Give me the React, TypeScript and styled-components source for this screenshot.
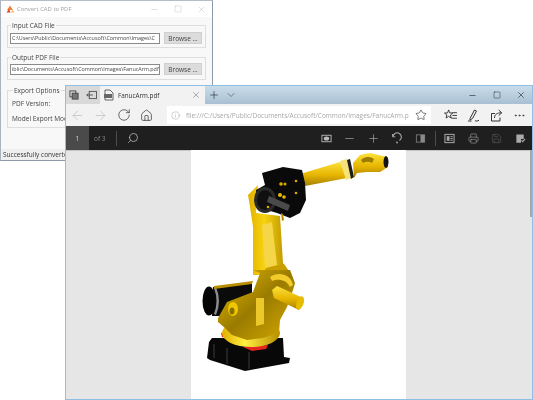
import styled, { createGlobalStyle } from 'styled-components';
import {
  ArrowLeft,
  ArrowRight,
  ChevronDown,
  Ellipsis,
  Home,
  Info,
  Minus,
  Plus,
  Printer,
  RotateCw,
  Save,
  Search,
  Square,
  Star,
  X,
} from 'lucide-react';

const GlobalStyle = createGlobalStyle`
  html, body {
    margin: 0;
    padding: 0;
    background: #fff;
  }
`;

const CAD_FONT = `"Open Sans", "Liberation Sans", sans-serif`;

const FitToPageIcon = () => (
  <svg width="11" height="11" viewBox="0 0 12 12" fill="none">
    <rect x="1" y="2.5" width="10" height="7" stroke="#aaa" strokeWidth="1.1" />
    <ellipse cx="6" cy="6" rx="3" ry="2.2" fill="#bbb" />
  </svg>
);

const ReadPagesIcon = () => (
  <svg width="11" height="11" viewBox="0 0 12 12" fill="none">
    <rect x="1.5" y="2" width="9" height="8" stroke="#777" strokeWidth="1" />
    <rect x="6" y="2" width="4.5" height="8" fill="#8a8a8a" />
  </svg>
);

const RotateIcon = () => (
  <svg width="12" height="12" viewBox="0 0 12 12" fill="none">
    <path d="M2 4.5a4.2 4.2 0 1 1 6.5 4" stroke="#aaa" strokeWidth="1.1" />
    <circle cx="6" cy="10.5" r="0.9" fill="#aaa" />
    <path d="M1.5 2v2.8h2.8" stroke="#aaa" strokeWidth="0.9" />
  </svg>
);

const BookIcon = () => (
  <svg width="11" height="11" viewBox="0 0 12 12" fill="none">
    <rect x="1" y="1.5" width="10" height="9" stroke="#aaa" strokeWidth="1.1" />
    <rect x="3" y="3.5" width="3" height="5" fill="#aaa" />
    <path d="M7 4h2.5M7 6h2.5M7 8h2.5" stroke="#aaa" strokeWidth="1" />
  </svg>
);

const ClipIcon = () => (
  <svg width="11" height="11" viewBox="0 0 12 12" fill="none">
    <path d="M1.5 1.5h8v5h-3v4h-5z" fill="#aaa" />
    <path d="M7 8l1.5 1.5L11 6.5" stroke="#aaa" strokeWidth="1.2" />
  </svg>
);

const FavoritesIcon = () => (
  <svg width="13" height="12" viewBox="0 0 14 13" fill="none">
    <path
      d="M5 1l1.2 3.2 3.3.2-2.6 2.1.9 3.3L5 8l-2.8 1.8.9-3.3L.5 4.4l3.3-.2z"
      stroke="#333"
      strokeWidth="1"
    />
    <path d="M9 4h5M9 7h5M8 10h6" stroke="#333" strokeWidth="1" />
  </svg>
);

const PenIcon = () => (
  <svg width="13" height="13" viewBox="0 0 13 13" fill="none">
    <path d="M3 9.5L7.5 1l2 1-4 7.5L3 11z" stroke="#333" strokeWidth="1" />
    <path d="M1 12h3.5M8 11.5c1 .8 2.5.8 4-.3" stroke="#333" strokeWidth="1" />
  </svg>
);

const ShareIcon = () => (
  <svg width="13" height="13" viewBox="0 0 13 13" fill="none">
    <path d="M5 4.5H1.5V12H10V8.5" stroke="#333" strokeWidth="1" />
    <path d="M4.5 9c0-3.5 2.5-5.2 7-5.2M8.7 1l3 2.8-3 2.8" stroke="#333" strokeWidth="1" />
  </svg>
);

const TabsAsideIcon = () => (
  <svg width="10" height="10" viewBox="0 0 11 11" fill="none">
    <rect x="1" y="1" width="6.5" height="6.5" stroke="#444" strokeWidth="1" />
    <rect x="3.5" y="3.5" width="6.5" height="6.5" fill="#777" stroke="#444" />
  </svg>
);

const SetAsideIcon = () => (
  <svg width="11" height="10" viewBox="0 0 12 11" fill="none">
    <rect x="3.5" y="1.5" width="8" height="8" stroke="#444" strokeWidth="0.9" />
    <path d="M7.5 5.5H.8M2.6 3.8L.8 5.5l1.8 1.7" stroke="#444" strokeWidth="0.9" />
  </svg>
);

const PdfTabIcon = () => (
  <svg width="11" height="12" viewBox="0 0 11 12" fill="none">
    <path d="M2 1h5l3 3v7H2z" stroke="#555" strokeWidth="0.9" />
    <rect x="1" y="5" width="8" height="4" fill="#666" />
  </svg>
);

const AppLogo = () => (
  <svg width="9" height="8" viewBox="0 0 9 8">
    <path d="M4 .5L7 5H1z" fill="#e8833a" />
    <path d="M.5 7.5L3 4l1.5 3.5z" fill="#d9432b" />
    <path d="M5 7.5L6.5 5l2 2.5z" fill="#f2b05a" />
  </svg>
);

// the arm from the pdf, drawn in page coordinates
const Robot = () => (
  <svg width="216" height="250" viewBox="191 150 216 250">
    <defs>
      <linearGradient id="arm" x1="0" y1="0" x2="1" y2="0">
        <stop offset="0" stopColor="#e2b000" />
        <stop offset="0.4" stopColor="#f7d30f" />
        <stop offset="1" stopColor="#b58e00" />
      </linearGradient>
      <linearGradient id="tube" x1="0" y1="0" x2="0" y2="1">
        <stop offset="0" stopColor="#fbe23a" />
        <stop offset="0.55" stopColor="#e6b400" />
        <stop offset="1" stopColor="#a37e00" />
      </linearGradient>
      <linearGradient id="body" x1="0" y1="0" x2="1" y2="1">
        <stop offset="0" stopColor="#e8bb00" />
        <stop offset="0.5" stopColor="#9a7b00" />
        <stop offset="1" stopColor="#d7ab00" />
      </linearGradient>
      <linearGradient id="collar" x1="0" y1="0" x2="1" y2="0">
        <stop offset="0" stopColor="#e2b000" />
        <stop offset="0.4" stopColor="#ffee40" />
        <stop offset="1" stopColor="#b58e00" />
      </linearGradient>
    </defs>

    <path d="M300 174L340 162L347 178L305 186Z" fill="url(#tube)" />
    <path d="M340 161L347 159L352 178L346 180Z" fill="#f7e27a" />
    <path d="M347 160l3-1 4 18-3 2z" fill="#1c1c1c" />
    <path d="M353 163L360 155L370 153L387 157L388 167L380 172L367 172L357 173L354 178Z" fill="url(#tube)" />
    <path d="M361 160a8 6 0 0 1 13-1l-2 4a6 4 0 0 0-9 0z" fill="#9a7b00" />
    <ellipse cx="386" cy="162" rx="2.5" ry="6" fill="#141414" />

    <path d="M248 195L258 185L256 213L280 216L283 263L288 270L283 275L253 275L253 227L250 207Z" fill="url(#arm)" />
    <path d="M262 225L272 222L277 265L265 268Z" fill="#f5d648" />
    <path d="M266 268L284 264L288 270L283 275L262 275Z" fill="#c99f00" />

    <path d="M262 173L283 167L302 170L305 183L306 200L300 213L290 218L277 213L257 207L256 190L265 185Z" fill="#0a0a0a" />
    <ellipse cx="265" cy="200" rx="11" ry="13" fill="#2a2a2a" />
    <ellipse cx="265" cy="200" rx="8" ry="10" fill="#101010" />
    <path d="M269 196L290 205L288 211L267 202Z" fill="#4a4a4a" />
    <circle cx="281" cy="184" r="1.8" fill="#d9ad00" />
    <circle cx="285" cy="184" r="1.5" fill="#d9ad00" />
    <circle cx="280" cy="195" r="2" fill="#e6bb00" />
    <circle cx="284" cy="197" r="1.8" fill="#e6bb00" />
    <circle cx="296" cy="181" r="1.3" fill="#d9ad00" />
    <circle cx="296" cy="193" r="1.3" fill="#d9ad00" />
    <circle cx="268" cy="207" r="1.3" fill="#d9ad00" />
    <path d="M281 213l2 1 1 6-2 1z" fill="#b58a00" />

    <path d="M212 338L283 338L284 357L290 358L289 363L245 371L210 360L207 358L209 342Z" fill="#080808" />
    <path d="M213 344h2v14h-2zM226 348h2v16h-2zM248 352h2v17h-2z" fill="#222" />
    <path d="M221 333l5-1 2 6-6-1z" fill="#e5261f" />
    <path d="M243 347L268 345L266 349L252 351Z" fill="#e5261f" />

    <path d="M213 287L252 283L252 300L227 316L212 316Z" fill="#0b0b0b" />
    <ellipse cx="209" cy="301" rx="6.5" ry="14.5" fill="#050505" />
    <path d="M216 287q6 14 0 28l-2-1q5-13 0-26z" fill="#8c8c8c" />
    <path d="M214 286L253 281L252 284L214 289Z" fill="#b88f00" />

    <ellipse cx="251" cy="333" rx="29" ry="14" fill="url(#collar)" />
    <path d="M218 318L227 302L253 292L260 273L253 270L290 270L295 283L293 290L287 307L280 320L279 333L263 338L247 340L232 335L225 328L218 322Z" fill="url(#body)" />
    <path d="M256 298h8v26l-8 2z" fill="#ecc82a" />
    <ellipse cx="233" cy="309" rx="5" ry="7" fill="#f0c800" />
    <ellipse cx="232" cy="311" rx="2.5" ry="3.5" fill="#8a6f00" />
    <path d="M270 277c8-6 21-3 23 8l-3 2c-3-7-12-9-18-6z" fill="#f1cc2a" />
    <path d="M272 290L277 286L303 298L299 310L274 298Z" fill="url(#tube)" />
    <ellipse cx="300" cy="303" rx="3.5" ry="7" fill="#e6bb00" transform="rotate(20 300 303)" />
  </svg>
);

const App = () => (
  <>
    <GlobalStyle />
    <Desktop>
      <CadWindow>
        <CadTitleBar>
          <AppLogo />
          <CadTitle>Convert CAD to PDF</CadTitle>
          <CadControls>
            <Minus size={9} strokeWidth={1} />
            <Square size={8} strokeWidth={1} />
            <X size={9} strokeWidth={1} />
          </CadControls>
        </CadTitleBar>
        <CadBody>
          <GroupBox>
            <legend>Input CAD File</legend>
            <FileRow>
              <PathField>C:\Users\Public\Documents\Accusoft\Common\Images\C</PathField>
              <BrowseButton>Browse ...</BrowseButton>
            </FileRow>
          </GroupBox>
          <OutputBox>
            <legend>Output PDF File</legend>
            <FileRow>
              <PathField>iblic\Documents\Accusoft\Common\Images\FanucArm.pdf</PathField>
              <BrowseButton>Browse ...</BrowseButton>
            </FileRow>
          </OutputBox>
          <OptionsBox>
            <legend>Export Options</legend>
            <OptionLabel>PDF Version:</OptionLabel>
            <OptionLabel>Model Export Mode:</OptionLabel>
          </OptionsBox>
        </CadBody>
        <StatusBar>Successfully converted</StatusBar>
      </CadWindow>

      <BrowserWindow>
        <TabStrip>
          <TabTools>
            <TabsAsideIcon />
            <SetAsideIcon />
          </TabTools>
          <Tab>
            <PdfTabIcon />
            <TabTitle>FanucArm.pdf</TabTitle>
            <X size={10} strokeWidth={1.2} color="#666" />
          </Tab>
          <StripButton>
            <Plus size={12} strokeWidth={1.2} color="#222" />
          </StripButton>
          <StripButton>
            <ChevronDown size={12} strokeWidth={1.2} color="#444" />
          </StripButton>
          <WindowControls>
            <StripButton>
              <Minus size={9} strokeWidth={1.6} color="#222" />
            </StripButton>
            <StripButton>
              <Square size={8} strokeWidth={1.4} color="#222" />
            </StripButton>
            <StripButton>
              <X size={10} strokeWidth={1.4} color="#222" />
            </StripButton>
          </WindowControls>
        </TabStrip>

        <AddressRow>
          <NavButton>
            <ArrowLeft size={15} strokeWidth={1} color="#b5b5b5" />
          </NavButton>
          <NavButton>
            <ArrowRight size={15} strokeWidth={1} color="#b5b5b5" />
          </NavButton>
          <NavButton>
            <RotateCw size={14} strokeWidth={1.1} color="#222" />
          </NavButton>
          <NavButton>
            <Home size={13} strokeWidth={1.2} color="#222" />
          </NavButton>
          <UrlBox>
            <Info size={9} strokeWidth={1} color="#888" />
            <UrlText>file:///C:/Users/Public/Documents/Accusoft/Common/Images/FanucArm.p</UrlText>
            <Star size={12} strokeWidth={1.2} color="#222" />
          </UrlBox>
          <AddressTools>
            <NavButton>
              <FavoritesIcon />
            </NavButton>
            <NavButton>
              <PenIcon />
            </NavButton>
            <NavButton>
              <ShareIcon />
            </NavButton>
            <NavButton>
              <Ellipsis size={13} strokeWidth={1.4} color="#333" />
            </NavButton>
          </AddressTools>
        </AddressRow>

        <PdfBar>
          <PageBox>1</PageBox>
          <PageCount>of 3</PageCount>
          <PdfDivider />
          <SearchButton>
            <SearchGlass size={12} strokeWidth={1.4} color="#ccc" />
          </SearchButton>
          <PdfTools>
            <PdfButton>
              <FitToPageIcon />
            </PdfButton>
            <PdfButton>
              <Minus size={13} strokeWidth={1.1} color="#bbb" />
            </PdfButton>
            <PdfButton>
              <Plus size={13} strokeWidth={1.1} color="#bbb" />
            </PdfButton>
            <PdfButton>
              <RotateIcon />
            </PdfButton>
            <PdfButton>
              <ReadPagesIcon />
            </PdfButton>
            <ToolsDivider />
            <PdfButton>
              <BookIcon />
            </PdfButton>
            <PdfButton>
              <Printer size={11} strokeWidth={1.2} color="#aaa" />
            </PdfButton>
            <PdfButton>
              <Save size={11} strokeWidth={1.1} color="#666" />
            </PdfButton>
            <PdfButton>
              <ClipIcon />
            </PdfButton>
          </PdfTools>
        </PdfBar>

        <PdfViewport>
          <PdfPage>
            <Robot />
          </PdfPage>
          <ScrollThumb />
        </PdfViewport>
      </BrowserWindow>
    </Desktop>
  </>
);

export default App;

const Desktop = styled.div`
  position: relative;
  width: 533px;
  height: 400px;
  overflow: hidden;
  background: #fff;
  filter: blur(0.3px);
`;

const CadWindow = styled.div`
  position: absolute;
  left: 0;
  top: 0;
  width: 213px;
  height: 161px;
  box-sizing: border-box;
  display: flex;
  flex-direction: column;
  background: #f4f4f4;
  border: 1px solid #8d9aa8;
  border-left-color: #a9b4c0;
  border-top-color: #b5bec8;
  font-family: ${CAD_FONT};
  font-size: 6.5px;
  color: #444;
`;

const CadTitleBar = styled.div`
  display: flex;
  align-items: center;
  height: 16px;
  padding: 0 0 0 5px;
  background: #fff;
  flex: none;
`;

const CadTitle = styled.span`
  margin-left: 2px;
  font-size: 5.9px;
  color: #a0a0a0;
`;

const CadControls = styled.div`
  display: flex;
  align-items: center;
  gap: 15px;
  margin-left: auto;
  padding-right: 6px;
  color: #aaa;
`;

const CadBody = styled.div`
  flex: 1;
  display: flex;
  flex-direction: column;
  gap: 6px;
  padding: 5px 6px 0;
  background: #f8f8f8;
`;

const GroupBox = styled.fieldset`
  margin: 0;
  padding: 3px 2px 0 2px;
  height: 26px;
  box-sizing: border-box;
  border: 1px solid #dedede;
  min-width: 0;

  legend {
    margin-left: 1px;
    padding: 0 1px;
    font-size: 6.5px;
    line-height: 7px;
    color: #444;
  }
`;

const OutputBox = styled(GroupBox)`
  padding-top: 2px;
`;

const OptionsBox = styled(GroupBox)`
  height: 41px;
  margin-top: 1px;
  padding: 6px 0 0 4px;
  display: flex;
  flex-direction: column;
  gap: 6.5px;
`;

const FileRow = styled.div`
  display: flex;
  align-items: center;
  gap: 4px;
`;

const PathField = styled.div`
  width: 150px;
  height: 11px;
  box-sizing: border-box;
  padding: 0 1px;
  overflow: hidden;
  white-space: nowrap;
  line-height: 9px;
  font-size: 5.4px;
  background: #fff;
  border: 1px solid #8a8a8a;
  color: #444;
`;

const BrowseButton = styled.div`
  width: 38px;
  height: 12px;
  line-height: 11px;
  text-align: center;
  font-size: 6.5px;
  background: #dcdcdc;
  border: 1px solid #cfcfcf;
  box-sizing: border-box;
  color: #444;
`;

const OptionLabel = styled.div`
  line-height: 8px;
  color: #444;
`;

const StatusBar = styled.div`
  height: 11px;
  line-height: 11px;
  padding-left: 2px;
  font-size: 6.5px;
  background: #efefef;
  color: #333;
  flex: none;
`;

const BrowserWindow = styled.div`
  position: absolute;
  left: 65px;
  top: 85px;
  width: 468px;
  height: 315px;
  box-sizing: border-box;
  display: flex;
  flex-direction: column;
  border: 1px solid #8fbfe2;
  font-family: 'Open Sans', 'Liberation Sans', sans-serif;
  background: #f2f2f2;
`;

const TabStrip = styled.div`
  display: flex;
  align-items: stretch;
  height: 18px;
  flex: none;
  background: linear-gradient(180deg, #c9dcea 0%, #a9c0d2 100%);
`;

const TabTools = styled.div`
  display: flex;
  align-items: center;
  justify-content: space-around;
  width: 34px;
  background: #d9d9d9;
`;

const Tab = styled.div`
  display: flex;
  align-items: center;
  gap: 4px;
  width: 105px;
  box-sizing: border-box;
  padding: 0 4px 0 3px;
  background: #f2f2f2;
`;

const TabTitle = styled.span`
  flex: 1;
  font-size: 6.3px;
  color: #333;
`;

const StripButton = styled.div`
  display: flex;
  align-items: center;
  justify-content: center;
  width: 17px;
`;

const WindowControls = styled.div`
  display: flex;
  margin-left: auto;
  gap: 7px;
  padding-right: 3px;
`;

const AddressRow = styled.div`
  display: flex;
  align-items: center;
  height: 22px;
  flex: none;
  background: #f2f2f2;
`;

const NavButton = styled.div`
  display: flex;
  align-items: center;
  justify-content: center;
  width: 23px;
  height: 100%;
`;

const UrlBox = styled.div`
  display: flex;
  align-items: center;
  width: 264px;
  height: 18px;
  box-sizing: border-box;
  margin-left: 9px;
  padding: 0 4px;
  background: #fff;
`;

const UrlText = styled.span`
  flex: 1;
  min-width: 0;
  margin-left: 6px;
  overflow: hidden;
  white-space: nowrap;
  font-size: 6.5px;
  color: #a8a8a8;
`;

const AddressTools = styled.div`
  display: flex;
  align-items: center;
  height: 100%;
  margin-left: 8px;
`;

const PdfBar = styled.div`
  display: flex;
  align-items: center;
  height: 24px;
  flex: none;
  background: #1f1f1f;
`;

const PageBox = styled.div`
  width: 23px;
  height: 100%;
  display: flex;
  align-items: center;
  justify-content: center;
  font-size: 7px;
  color: #ccc;
  background: #4a4a4a;
`;

const PageCount = styled.span`
  margin-left: 5px;
  width: 22px;
  font-size: 6.5px;
  color: #888;
`;

const PdfDivider = styled.div`
  width: 1px;
  height: 15px;
  background: #4d4d4d;
`;

const ToolsDivider = styled(PdfDivider)`
  margin: 0 2px 0 3px;
`;

const PdfButton = styled.div`
  display: flex;
  align-items: center;
  justify-content: center;
  width: 23.5px;
`;

const SearchButton = styled(PdfButton)`
  margin-left: 4px;
`;

const SearchGlass = styled(Search)`
  transform: scaleX(-1);
`;

const PdfTools = styled.div`
  display: flex;
  align-items: center;
  margin-left: auto;
`;

const PdfViewport = styled.div`
  position: relative;
  flex: 1;
  min-height: 0;
  display: flex;
  justify-content: center;
  padding-right: 126px;
  padding-left: 125px;
  box-sizing: border-box;
  background: #e6e6e6;
  box-shadow: inset 0 1px 0 #c4c4c4;
`;

const PdfPage = styled.div`
  width: 216px;
  height: 100%;
  overflow: hidden;
  background: #fff;

  svg {
    display: block;
  }
`;

const ScrollThumb = styled.div`
  position: absolute;
  right: 0;
  top: 0;
  width: 2px;
  height: 67px;
  background: #a6a6a6;
`;
